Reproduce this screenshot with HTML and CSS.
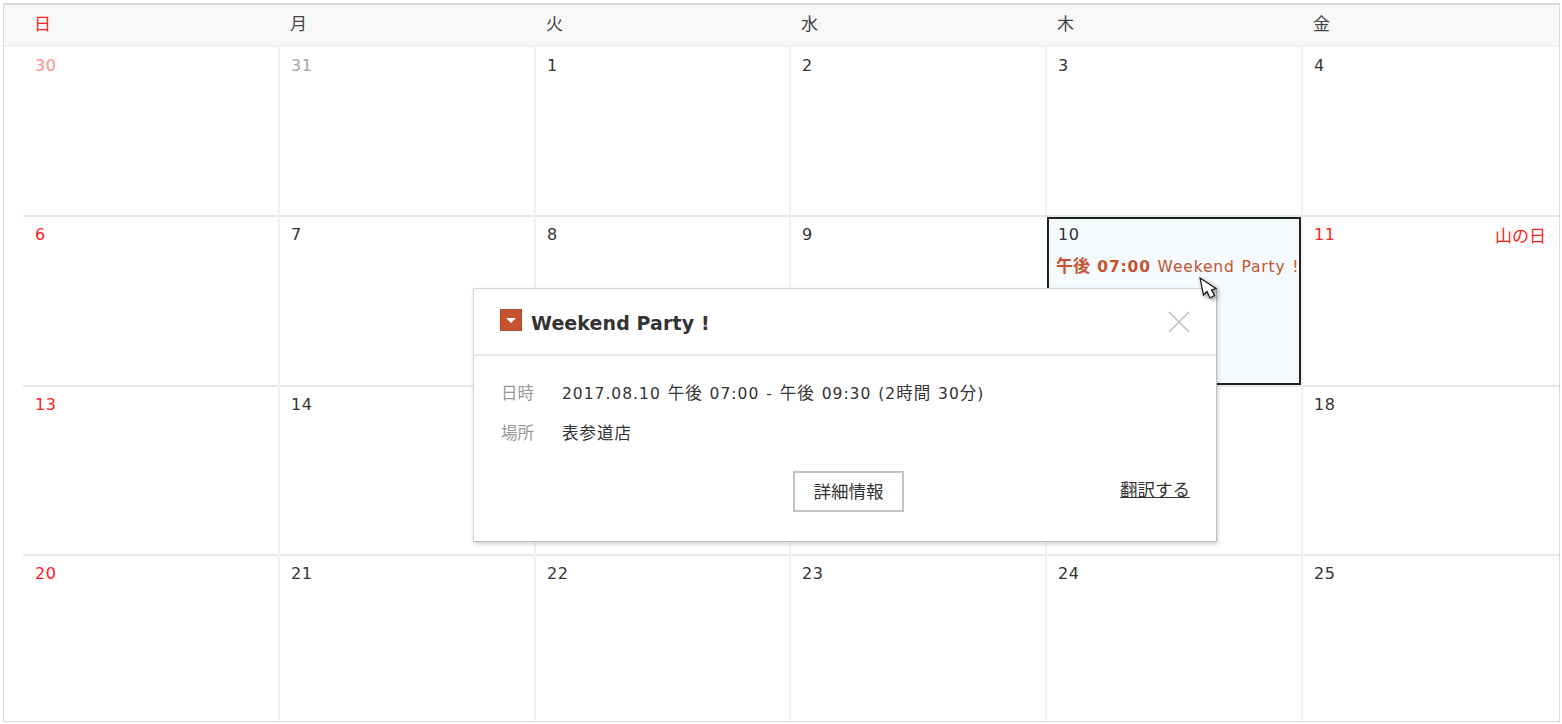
FILE: index.html
```html
<!DOCTYPE html>
<html lang="ja">
<head>
<meta charset="utf-8">
<title>カレンダー</title>
<link rel="stylesheet" href="styles.css">
</head>
<body>
<div class="calendar">
  <div class="head">
    <div class="hcell sun">日</div><div class="hcell">月</div><div class="hcell">火</div><div class="hcell">水</div><div class="hcell">木</div><div class="hcell">金</div>
  </div>
  <div class="week">
    <div class="day first"><span class="num sun other">30</span></div>
    <div class="day"><span class="num other">31</span></div>
    <div class="day"><span class="num">1</span></div>
    <div class="day"><span class="num">2</span></div>
    <div class="day"><span class="num">3</span></div>
    <div class="day"><span class="num">4</span></div>
  </div>
  <div class="week">
    <div class="day first"><span class="num sun">6</span></div>
    <div class="day"><span class="num">7</span></div>
    <div class="day"><span class="num">8</span></div>
    <div class="day"><span class="num">9</span></div>
    <div class="day selected"><span class="num">10</span><div class="event"><b><span class="ja">午後</span> 07:00</b> Weekend Party !</div></div>
    <div class="day"><div class="numrow"><span class="num sun">11</span><span class="holiday">山の日</span></div></div>
  </div>
  <div class="week">
    <div class="day first"><span class="num sun">13</span></div>
    <div class="day"><span class="num">14</span></div>
    <div class="day"></div>
    <div class="day"></div>
    <div class="day"></div>
    <div class="day"><span class="num">18</span></div>
  </div>
  <div class="week">
    <div class="day first"><span class="num sun">20</span></div>
    <div class="day"><span class="num">21</span></div>
    <div class="day"><span class="num">22</span></div>
    <div class="day"><span class="num">23</span></div>
    <div class="day"><span class="num">24</span></div>
    <div class="day"><span class="num">25</span></div>
  </div>
</div>

<div class="popup">
  <div class="popup-head">
    <span class="flag"><svg width="22" height="22" viewBox="0 0 22 22"><rect x=".5" y=".5" width="21" height="21" fill="#c4532f" stroke="#b44a29"/><path d="M6 9h10l-5 5z" fill="#fff"/></svg></span>
    <h2 class="title">Weekend Party !</h2>
    <svg class="close" width="22" height="22" viewBox="0 0 22 22"><path d="M1 1l20 20M21 1L1 21" stroke="#b9b9b9" stroke-width="1.4" fill="none"/></svg>
  </div>
  <div class="popup-body">
    <div class="row"><span class="label">日時</span><span class="value">2017.08.10 <span class="ja">午後</span> 07:00 - <span class="ja">午後</span> 09:30 (2<span class="ja">時間</span> 30<span class="ja">分</span>)</span></div>
    <div class="row"><span class="label">場所</span><span class="value ja">表参道店</span></div>
    <div class="actions">
      <button class="detail">詳細情報</button>
      <a class="translate" href="#">翻訳する</a>
    </div>
  </div>
</div>

<svg class="cursor" width="19" height="24" viewBox="0 0 19 24"><path d="M1 1L4.5 18L8 14.5L11 21L15.5 18.5L12.5 13L17 11.5Z" fill="#fff" stroke="#111" stroke-width="1.2" stroke-linejoin="miter"/></svg>
</body>
</html>
```
FILE: styles.css
```css
* { box-sizing: border-box; }
html, body { margin: 0; padding: 0; background: #fff; }
body {
  width: 1562px;
  height: 724px;
  overflow: hidden;
  font-family: "DejaVu Sans", "Noto Sans CJK JP", sans-serif;
  font-size: 15px;
  color: #333;
  padding: 3px 2px 2px 3px;
}
.ja { font-family: "Noto Sans CJK JP", sans-serif; }
.calendar {
  width: 1557px;
  height: 719px;
  border: 1px solid #d9d9d9;
  border-top-width: 2px;
  display: grid;
  grid-template-rows: 42px 168px 170px 169px 1fr;
}
.head, .week {
  display: grid;
  grid-template-columns: 274px 256px 255px 256px 256px 1fr;
}
.head {
  background: #f8f8f8;
  border-bottom: 2px solid #f0f0f0;
}
.hcell {
  padding: 7px 0 0 12px;
  line-height: 22px;
  font-family: "Noto Sans CJK JP", sans-serif;
  font-size: 17px;
  color: #444;
}
.hcell:first-child { padding-left: 30px; }
.week { position: relative; }
.week + .week::before {
  content: "";
  position: absolute;
  left: 19px;
  right: 0;
  top: 0;
  height: 2px;
  background: #e8e8e8;
}
.day {
  border-left: 2px solid #f2f2f2;
  padding: 9px 10px 0 11px;
  min-width: 0;
  position: relative;
}
.head + .week .day { padding-top: 8px; }
.day.first { border-left: 0; padding-left: 31px; }
.num {
  display: block;
  line-height: 22px;
  font-size: 16px;
  letter-spacing: .5px;
  color: #333;
}
.num.other { color: #a3a3a3; }
.num.sun, .hcell.sun, .holiday { color: #f22; }
.num.sun.other { color: #ff8f8f; }
.numrow { display: flex; justify-content: space-between; padding-right: 3px; }
.holiday { font-size: 17px; line-height: 22px; font-family: "Noto Sans CJK JP", sans-serif; }
.selected {
  border: 2px solid #222;
  background: #f5fafd;
  margin: 2px 0 0 2px;
  padding: 5px 0 0 9px;
  overflow: hidden;
  z-index: 1;
}
.event {
  margin-top: 8px;
  margin-left: -2px;
  color: #c4532f;
  font-size: 15.5px;
  letter-spacing: .85px;
  word-spacing: 1px;
  line-height: 22px;
  white-space: nowrap;
}
.event .ja { font-size: 17px; letter-spacing: 0; }
.popup {
  position: absolute;
  left: 473px;
  top: 288px;
  width: 744px;
  height: 254px;
  z-index: 2;
  background: #fff;
  border: 1px solid #d4d4d4;
  border-right-color: #bdbdbd;
  border-bottom-color: #bdbdbd;
  box-shadow: 1px 2px 4px rgba(0, 0, 0, .18);
}
.popup-head {
  height: 67px;
  display: flex;
  align-items: flex-start;
  border-bottom: 2px solid #e8e8e8;
  padding: 20px 26px 0 26px;
}
.flag { display: block; height: 22px; width: 22px; }
.flag svg { display: block; }
.title {
  margin: 0 0 0 9px;
  font-size: 19px;
  font-weight: 700;
  letter-spacing: .1px;
  line-height: 28px;
  color: #333;
}
.close { margin-left: auto; margin-top: 2px; }
.popup-body { padding: 24px 26px 0 27px; font-size: 16px; }
.row { display: flex; height: 24px; line-height: 24px; margin-bottom: 16px; }
.label { width: 61px; color: #999; flex: none; font-family: "Noto Sans CJK JP", sans-serif; font-size: 16.5px; }
.value { font-size: 15.5px; letter-spacing: 1px; word-spacing: 1px; }
.value .ja, .value.ja { font-size: 16.5px; }
.actions {
  display: flex;
  align-items: flex-start;
  justify-content: space-between;
  margin-top: 27px;
  padding-left: 292px;
}
.detail {
  width: 111px;
  height: 41px;
  background: #fff;
  border: 2px solid #c4c4c4;
  font-family: "Noto Sans CJK JP", sans-serif;
  font-size: 17.5px;
  color: #333;
  padding: 0 0 3px;
}
.translate { color: #333; text-decoration: underline; margin-top: 6px; line-height: 24px; font-family: "Noto Sans CJK JP", sans-serif; font-size: 17.5px; }
.cursor {
  position: absolute;
  left: 1199px;
  top: 277px;
  z-index: 3;
  filter: drop-shadow(2px 2px 2px rgba(0,0,0,.45));
}
```
